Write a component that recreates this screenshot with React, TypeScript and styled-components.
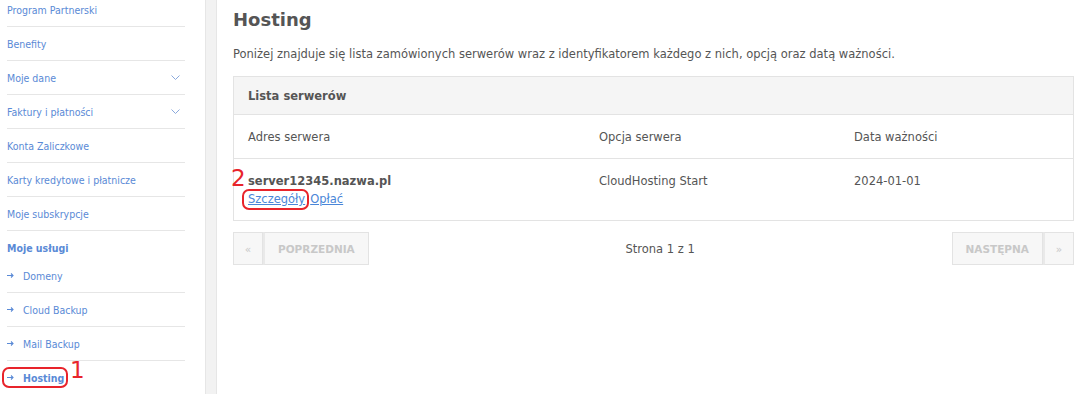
import React from 'react';
import styled, { createGlobalStyle } from 'styled-components';

const GlobalStyle = createGlobalStyle`
  html, body {
    margin: 0;
    padding: 0;
    background: #fff;
    overflow: hidden;
  }
  body {
    font-family: 'DejaVu Sans', Verdana, sans-serif;
  }
`;

const Page = styled.div`
  display: flex;
  width: 1077px;
  height: 394px;
  overflow: hidden;
`;

const Sidebar = styled.nav`
  width: 198px;
  padding-left: 7px;
  flex-shrink: 0;
`;

const MenuList = styled.ul`
  list-style: none;
  margin: -7px 0 0;
  padding: 0;
  width: 178px;
  font-family: 'DejaVu Sans Condensed', 'DejaVu Sans', sans-serif;
  font-size: 10.5px;
`;

const MenuItem = styled.li<{ $last?: boolean }>`
  display: flex;
  align-items: center;
  justify-content: space-between;
  height: 33px;
  border-bottom: ${p => (p.$last ? 'none' : '1px solid #e6e6e6')};
  color: #5a8ad6;
  position: relative;
`;

const MenuHeading = styled.li`
  height: 28px;
  display: flex;
  align-items: center;
  padding-top: 5px;
  box-sizing: border-box;
  font-weight: bold;
  color: #5a8ad6;
`;

const SubLink = styled.span<{ $active?: boolean }>`
  display: flex;
  align-items: center;
  gap: 9px;
  font-weight: ${p => (p.$active ? 'bold' : 'normal')};
  position: relative;
`;

const Ring = styled.span`
  position: absolute;
  border: 2px solid #e8242b;
  border-radius: 7px;
  pointer-events: none;
`;

const Marker = styled.span`
  position: absolute;
  color: #e8242b;
  font-family: 'DejaVu Sans', sans-serif;
  font-size: 23px;
  font-weight: normal;
  line-height: 1;
`;

const Stripe = styled.div`
  width: 10px;
  flex-shrink: 0;
  background: #f2f2f2;
  border-left: 1px solid #e6e6e6;
  border-right: 1px solid #e6e6e6;
`;

const Main = styled.main`
  flex: 1;
  padding: 8px 3px 0 16px;
  color: #555;
  font-size: 11.5px;
`;

const Title = styled.h1`
  margin: 0;
  font-size: 18px;
  font-weight: bold;
  color: #555;
  line-height: 24px;
`;

const Lead = styled.p`
  margin: 15px 0 14px;
  line-height: 15px;
  color: #555;
`;

const Panel = styled.section`
  border: 1px solid #e3e3e3;
`;

const PanelHeader = styled.div`
  background: #f5f5f5;
  height: 37px;
  display: flex;
  align-items: center;
  padding-left: 14px;
  font-weight: bold;
  border-bottom: 1px solid #e3e3e3;
`;

const TableRow = styled.div<{ $height: number; $head?: boolean }>`
  display: grid;
  grid-template-columns: 351px 255px 1fr;
  height: ${p => p.$height}px;
  border-bottom: ${p => (p.$head ? '1px solid #e3e3e3' : 'none')};
  align-items: ${p => (p.$head ? 'center' : 'start')};
  box-sizing: border-box;
`;

const Cell = styled.div<{ $top?: number }>`
  padding-left: 14px;
  padding-top: ${p => p.$top ?? 0}px;
  line-height: 18px;
  position: relative;
`;

const ServerName = styled.div`
  font-weight: bold;
`;

const Links = styled.div`
  display: flex;
  gap: 5px;
`;

const TextLink = styled.a`
  color: #4a86d8;
  text-decoration: underline;
  position: relative;
`;

const Pager = styled.div`
  display: flex;
  align-items: center;
  justify-content: space-between;
  margin-top: 11px;
`;

const PagerGroup = styled.div`
  display: flex;
`;

const PagerButton = styled.span<{ $narrow?: boolean }>`
  height: 31px;
  display: flex;
  align-items: center;
  justify-content: center;
  padding: 0 ${p => (p.$narrow ? 0 : 13)}px;
  width: ${p => (p.$narrow ? '28px' : 'auto')};
  background: #f7f7f7;
  border: 1px solid #e3e3e3;
  color: #c8c8c8;
  font-size: 10.5px;
  font-weight: ${p => (p.$narrow ? 'normal' : 'bold')};
  & + & {
    border-left: 2px solid #e9e9e9;
  }
`;

const PageInfo = styled.span`
  color: #555;
`;

const Arrow = () => (
  <svg width="7" height="5" viewBox="0 0 7 5" aria-hidden>
    <path d="M0 2.5h6M4 0.5l2 2-2 2" stroke="#5a8ad6" strokeWidth="1.1" fill="none" />
  </svg>
);

const Chevron = () => (
  <svg width="9" height="5" viewBox="0 0 9 5" style={{ marginRight: 5 }} aria-hidden>
    <path d="M0.5 0.5l4 4 4-4" stroke="#8aa9dc" strokeWidth="1" fill="none" />
  </svg>
);

const topItems = [
  { label: 'Program Partnerski' },
  { label: 'Benefity' },
  { label: 'Moje dane', more: true },
  { label: 'Faktury i płatności', more: true },
  { label: 'Konta Zaliczkowe' },
  { label: 'Karty kredytowe i płatnicze' },
  { label: 'Moje subskrypcje' },
];

const services = ['Domeny', 'Cloud Backup', 'Mail Backup'];

export default function App() {
  return (
    <Page>
      <GlobalStyle />
      <Sidebar>
        <MenuList>
          {topItems.map(item => (
            <MenuItem key={item.label}>
              <span>{item.label}</span>
              {item.more && <Chevron />}
            </MenuItem>
          ))}
          <MenuHeading>Moje usługi</MenuHeading>
          {services.map(s => (
            <MenuItem key={s}>
              <SubLink>
                <Arrow />
                {s}
              </SubLink>
            </MenuItem>
          ))}
          <MenuItem $last>
            <SubLink $active>
              <Arrow />
              Hosting
              <Ring style={{ left: -5, right: -4, top: -5, bottom: -4 }} />
              <Marker style={{ left: 63, top: -13 }}>1</Marker>
            </SubLink>
          </MenuItem>
        </MenuList>
      </Sidebar>
      <Stripe />
      <Main>
        <Title>Hosting</Title>
        <Lead>
          Poniżej znajduje się lista zamówionych serwerów wraz z identyfikatorem każdego z nich, opcją oraz datą ważności.
        </Lead>
        <Panel>
          <PanelHeader>Lista serwerów</PanelHeader>
          <TableRow $height={44} $head>
            <Cell>Adres serwera</Cell>
            <Cell>Opcja serwera</Cell>
            <Cell>Data ważności</Cell>
          </TableRow>
          <TableRow $height={61}>
            <Cell $top={13}>
              <Marker style={{ left: -3, top: 8 }}>2</Marker>
              <ServerName>server12345.nazwa.pl</ServerName>
              <Links>
                <TextLink>
                  Szczegóły
                  <Ring style={{ left: -6, right: -4, top: -1, bottom: -2 }} />
                </TextLink>
                <TextLink>Opłać</TextLink>
              </Links>
            </Cell>
            <Cell $top={13}>CloudHosting Start</Cell>
            <Cell $top={13}>2024-01-01</Cell>
          </TableRow>
        </Panel>
        <Pager>
          <PagerGroup>
            <PagerButton $narrow>«</PagerButton>
            <PagerButton>POPRZEDNIA</PagerButton>
          </PagerGroup>
          <PageInfo>Strona 1 z 1</PageInfo>
          <PagerGroup>
            <PagerButton>NASTĘPNA</PagerButton>
            <PagerButton $narrow>»</PagerButton>
          </PagerGroup>
        </Pager>
      </Main>
    </Page>
  );
}
